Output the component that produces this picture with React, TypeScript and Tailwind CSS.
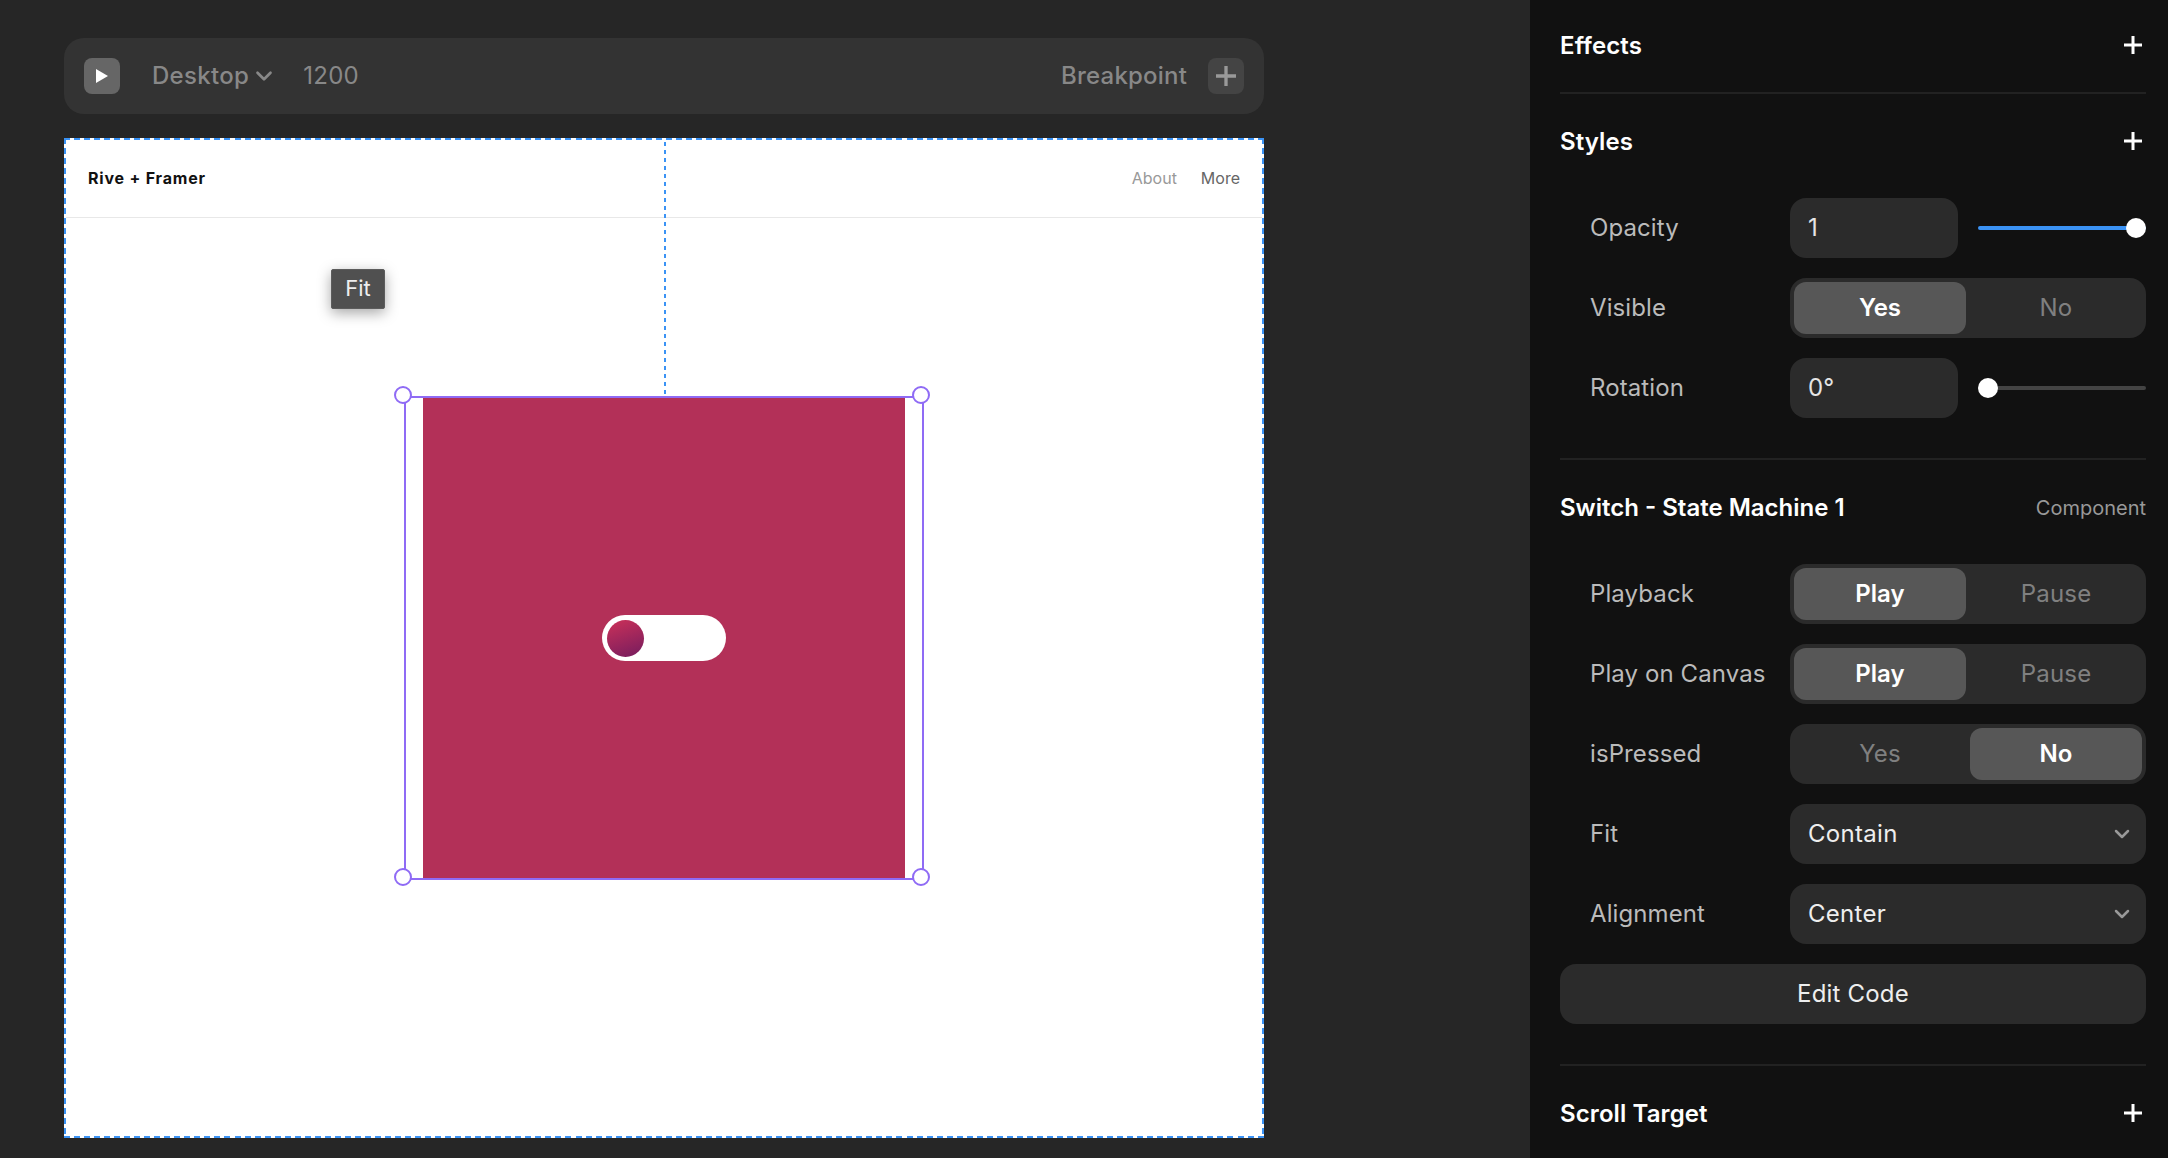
import React from "react";
import { ChevronDown } from "lucide-react";

const Plus = ({ className }: { className: string }) => (
  <svg viewBox="0 0 18 18" className={className} fill="none" stroke="currentColor" strokeWidth="3">
    <path d="M9 0v18M0 9h18" />
  </svg>
);

const SectionHeader = ({ title }: { title: string }) => (
  <div className="flex items-center justify-between">
    <span className="text-[24px] leading-[30px] font-semibold tracking-[0.1px] text-white">{title}</span>
    <Plus className="w-[18px] h-[18px] mr-[4px] mb-[2px] text-white" />
  </div>
);

const Row = ({ label, children }: { label: string; children: React.ReactNode }) => (
  <div className="flex items-center h-[60px]">
    <span className="w-[230px] pl-[30px] text-[24px] tracking-[0.1px] text-[#bbbbbb] whitespace-nowrap">{label}</span>
    <div className="flex-1 flex items-center">{children}</div>
  </div>
);

const Segment = ({ left, right, active }: { left: string; right: string; active: "left" | "right" }) => (
  <div className="w-full h-[60px] rounded-[16px] bg-[#2b2b2b] p-[4px] flex gap-[4px]">
    <div className={active === "left" ? "flex-1 rounded-[12px] bg-[#575757] flex items-center justify-center text-[24px] font-semibold text-white" : "flex-1 flex items-center justify-center text-[24px] tracking-[0.2px] text-[#808080]"}>
      {left}
    </div>
    <div className={active === "right" ? "flex-1 rounded-[12px] bg-[#575757] flex items-center justify-center text-[24px] font-semibold text-white" : "flex-1 flex items-center justify-center text-[24px] tracking-[0.2px] text-[#808080]"}>
      {right}
    </div>
  </div>
);

const NumberInput = ({ value }: { value: string }) => (
  <div className="w-[168px] h-[60px] rounded-[16px] bg-[#2b2b2b] flex items-center pl-[18px] text-[24px] text-[#e5e5e5]">
    {value}
  </div>
);

const Select = ({ value }: { value: string }) => (
  <div className="w-full h-[60px] rounded-[16px] bg-[#2b2b2b] flex items-center justify-between pl-[18px] pr-[12px] text-[24px] tracking-[0.3px] text-[#eeeeee]">
    {value}
    <ChevronDown className="w-[24px] h-[24px] text-[#999999]" strokeWidth={2.5} />
  </div>
);

const Handle = ({ className }: { className: string }) => (
  <div className={"absolute w-[18px] h-[18px] rounded-full bg-white border-[2.5px] border-[#8f6bf5] " + className}></div>
);

export default function App() {
  return (
    <div className="flex h-screen overflow-hidden bg-[#262626] font-[family-name:Inter,sans-serif]">
      {/* Canvas side */}
      <div className="w-[1530px] pl-[64px] pt-[38px]">
        {/* Toolbar */}
        <div className="w-[1200px] h-[76px] rounded-[20px] bg-[#333333] flex items-center pl-[20px] pr-[20px] text-[24px] tracking-[0.3px] font-medium text-[#888888]">
          <div className="w-[36px] h-[36px] rounded-[8px] bg-[#666666] flex items-center justify-center">
            <svg viewBox="0 0 12 14" className="w-[12px] h-[14px] text-white" fill="currentColor">
              <path d="M0 0l12 7-12 7z" />
            </svg>
          </div>
          <span className="ml-[32px]">Desktop</span>
          <ChevronDown className="ml-[2px] w-[26px] h-[26px]" strokeWidth={2.5} />
          <span className="ml-[26px] font-normal">1200</span>
          <span className="ml-auto tracking-[0.2px]">Breakpoint</span>
          <div className="ml-[21px] w-[36px] h-[36px] rounded-[8px] bg-[#444444] flex items-center justify-center">
            <Plus className="w-[20px] h-[20px] text-[#999999]" />
          </div>
        </div>

        {/* Page frame */}
        <div className="relative mt-[24px] w-[1200px] h-[1000px] bg-white border-2 border-transparent">
          {/* Dashed frame outline */}
          <div className="absolute -top-[2px] -left-[2px] -right-[2px] h-[2px] bg-[repeating-linear-gradient(90deg,#3b93f5_0,#3b93f5_6px,transparent_6px,transparent_10.03px)]"></div>
          <div className="absolute -bottom-[2px] -left-[2px] -right-[2px] h-[2px] bg-[repeating-linear-gradient(90deg,#3b93f5_0,#3b93f5_6px,transparent_6px,transparent_10.03px)]"></div>
          <div className="absolute -top-[2px] -bottom-[2px] -left-[2px] w-[2px] bg-[repeating-linear-gradient(180deg,#3b93f5_0,#3b93f5_6px,transparent_6px,transparent_10px)]"></div>
          <div className="absolute -top-[2px] -bottom-[2px] -right-[2px] w-[2px] bg-[repeating-linear-gradient(180deg,#3b93f5_0,#3b93f5_6px,transparent_6px,transparent_10px)]"></div>

          <div className="h-[78px] border-b border-[#e8e8e8] flex items-center justify-between pl-[22px] pr-[22px] pb-[2px] text-[16px]">
            <span className="font-bold tracking-[0.8px] text-[#111111]">Rive + Framer</span>
            <div className="flex gap-[24px]">
              <span className="text-[#999999]">About</span>
              <span className="text-[#666666]">More</span>
            </div>
          </div>

          {/* Distance guide */}
          <div className="absolute left-[598px] -top-[2px] w-[2px] h-[256px] bg-[repeating-linear-gradient(180deg,transparent_0,transparent_4px,#3b93f5_4px,#3b93f5_8px)]"></div>

          {/* Fit tooltip */}
          <div className="absolute left-[265px] top-[129px] w-[54px] h-[40px] pb-[2px] rounded-[2px] bg-[#505050] border border-[#5c5c5c] shadow-[0_4px_14px_rgba(0,0,0,0.35)] flex items-center justify-center text-[22px] text-[#eeeeee]">
            Fit
          </div>

          {/* Selected component */}
          <div className="relative mx-auto mt-[178px] w-[520px] h-[484px] border-2 border-[#8f6bf5] flex justify-center">
            <Handle className="-left-[12px] -top-[12px]" />
            <Handle className="-right-[8px] -top-[12px]" />
            <Handle className="-left-[12px] -bottom-[8px]" />
            <Handle className="-right-[8px] -bottom-[8px]" />
            <div className="w-[482px] h-[480px] bg-[#b33058] flex items-center justify-center">
              <div className="w-[124px] h-[46px] rounded-full bg-white flex items-center pl-[5px]">
                <div className="w-[37px] h-[37px] rounded-full bg-linear-[160deg] from-[#cc3159] to-[#741c5e]"></div>
              </div>
            </div>
          </div>
        </div>
      </div>

      {/* Properties panel */}
      <div className="w-[638px] h-full bg-[#111111] pl-[30px] pr-[22px] pt-[31px]">
        <SectionHeader title="Effects" />
        <div className="mt-[31px] h-[2px] bg-[#222222]"></div>

        <div className="mt-[33px]">
          <SectionHeader title="Styles" />
        </div>
        <div className="mt-[41px] flex flex-col gap-[20px]">
          <Row label="Opacity">
            <NumberInput value="1" />
            <div className="relative ml-[20px] flex-1 h-[4px] rounded-full bg-[#3b93f5]">
              <div className="absolute right-0 -top-[8px] w-[20px] h-[20px] rounded-full bg-white"></div>
            </div>
          </Row>
          <Row label="Visible">
            <Segment left="Yes" right="No" active="left" />
          </Row>
          <Row label="Rotation">
            <NumberInput value="0°" />
            <div className="relative ml-[20px] flex-1 h-[4px] rounded-full bg-[#444444]">
              <div className="absolute left-0 -top-[8px] w-[20px] h-[20px] rounded-full bg-white"></div>
            </div>
          </Row>
        </div>
        <div className="mt-[40px] h-[2px] bg-[#222222]"></div>

        <div className="mt-[33px] flex items-center justify-between">
          <span className="text-[24px] leading-[30px] font-semibold text-white">Switch - State Machine 1</span>
          <span className="text-[20px] text-[#999999]">Component</span>
        </div>
        <div className="mt-[41px] flex flex-col gap-[20px]">
          <Row label="Playback">
            <Segment left="Play" right="Pause" active="left" />
          </Row>
          <Row label="Play on Canvas">
            <Segment left="Play" right="Pause" active="left" />
          </Row>
          <Row label="isPressed">
            <Segment left="Yes" right="No" active="right" />
          </Row>
          <Row label="Fit">
            <Select value="Contain" />
          </Row>
          <Row label="Alignment">
            <Select value="Center" />
          </Row>
          <div className="h-[60px] rounded-[16px] bg-[#2b2b2b] flex items-center justify-center text-[24px] tracking-[0.2px] text-[#eeeeee]">
            Edit Code
          </div>
        </div>
        <div className="mt-[40px] h-[2px] bg-[#222222]"></div>

        <div className="mt-[33px]">
          <SectionHeader title="Scroll Target" />
        </div>
      </div>
    </div>
  );
}
